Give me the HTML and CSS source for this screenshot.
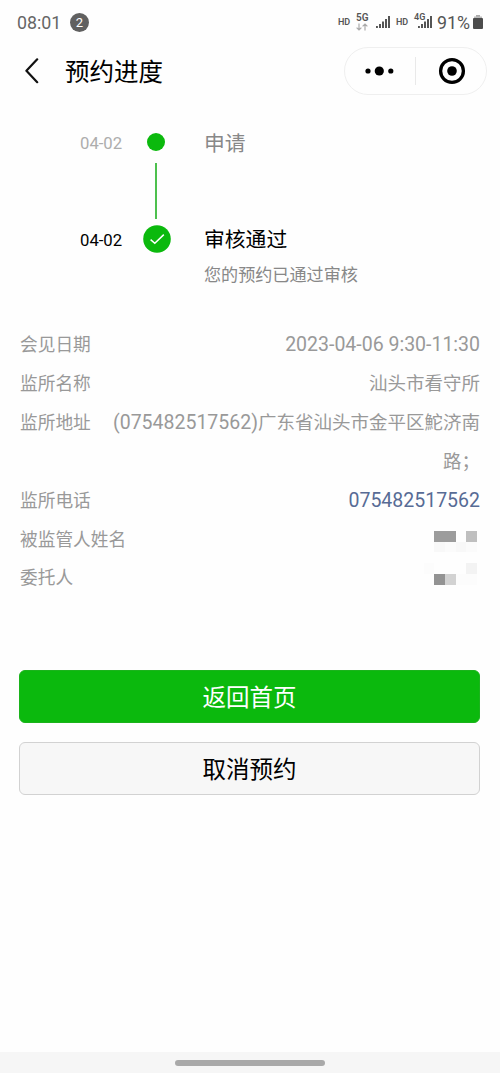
FILE: index.html
```html
<!DOCTYPE html>
<html lang="zh-CN">
<head>
<meta charset="utf-8">
<title>预约进度</title>
<link rel="stylesheet" href="styles.css">
</head>
<body>
<div class="screen">
  <div class="statusbar">
    <span class="clock">08:01</span>
    <span class="count">2</span>
    <div class="signals">
      <span class="hd">HD</span>
      <span class="net"><b>5G</b>
        <svg width="12" height="8" viewBox="0 0 12 8" fill="none" stroke="#aaa" stroke-width="1.2"><path d="M3 0.5V7M0.6 4.6L3 7L5.4 4.6M9 7.5V1M6.6 3.4L9 1L11.4 3.4"/></svg>
      </span>
      <svg class="bars" width="14" height="14" viewBox="0 0 14 14" fill="#555"><path d="M0 11h1.9v2H0zM3 9h2v4H3zM6 6.5h2V13H6zM9 4h2v9H9zM12 1h2v12H12z"/></svg>
      <span class="hd second">HD</span>
      <div class="lte"><b>4G</b>
        <svg class="bars" width="14" height="14" viewBox="0 0 14 14" fill="#555"><path d="M0 11h1.9v2H0zM3 9h2v4H3zM6 6.5h2V13H6zM9 4h2v9H9zM12 1h2v12H12z"/></svg>
      </div>
      <span class="percent">91%</span>
      <svg class="battery" width="10" height="14" viewBox="0 0 10 14"><path d="M3 0h4v2H3z" fill="#aaa"/><path d="M1 1.5h8v3H1z" fill="#bbb"/><rect y="3" width="10" height="11" rx="1" fill="#4c4c4c"/></svg>
    </div>
  </div>

  <header class="navbar">
    <svg class="back" width="14" height="26" viewBox="0 0 14 26" fill="none" stroke="#111" stroke-width="2.2" stroke-linecap="round" stroke-linejoin="round"><path d="M12.2 1.3L1.4 12.8L12.2 24.2"/></svg>
    <h1 class="title">预约进度</h1>
    <div class="capsule">
      <svg width="30" height="12" viewBox="0 0 30 12"><circle cx="4" cy="6" r="2.6"/><circle cx="15.3" cy="6" r="4.6"/><circle cx="26.8" cy="6" r="2.6"/></svg>
      <span class="divider"></span>
      <svg width="28" height="28" viewBox="0 0 28 28"><circle cx="14" cy="14" r="11.4" fill="none" stroke="#000" stroke-width="3.3"/><circle cx="14" cy="14" r="4.8"/></svg>
    </div>
  </header>

  <main>
    <section class="steps">
      <div class="step">
        <time class="date">04-02</time>
        <div class="marker">
          <span class="dot"></span>
          <span class="line"></span>
        </div>
        <div class="step-text">申请</div>
      </div>
      <div class="step current">
        <time class="date">04-02</time>
        <div class="marker">
          <svg width="28" height="28" viewBox="0 0 28 28"><circle cx="14" cy="14" r="13.8" fill="#0bb90d"/><path d="M7.6 14.6L11.8 18.2L20.8 9.6" fill="none" stroke="#fff" stroke-width="1.5"/></svg>
        </div>
        <div class="step-text">审核通过<p class="hint">您的预约已通过审核</p></div>
      </div>
    </section>

    <dl class="details">
      <div class="row"><dt>会见日期</dt><dd><span class="num">2023-04-06 9:30-11:30</span></dd></div>
      <div class="row"><dt>监所名称</dt><dd>汕头市看守所</dd></div>
      <div class="row"><dt>监所地址</dt><dd><span class="num">(075482517562)</span>广东省汕头市金平区鮀济南<br>路；</dd></div>
      <div class="row"><dt>监所电话</dt><dd><span class="num phone">075482517562</span></dd></div>
      <div class="row"><dt>被监管人姓名</dt><dd class="masked">
        <svg width="54" height="39" viewBox="0 0 54 39" shape-rendering="crispEdges"><path fill="#9c9c9c" d="M10 10h22v11H10z"/><path fill="#bfbfbf" d="M42 10h11v11H42z"/><path fill="#f8f8f8" d="M10 21h11v10H10zM32 21h10v10H32z"/><path fill="#fbfbfb" d="M21 21h11v10H21zM42 21h11v10H42z"/></svg>
      </dd></div>
      <div class="row"><dt>委托人</dt><dd class="masked">
        <svg width="54" height="39" viewBox="0 0 54 39" shape-rendering="crispEdges"><path fill="#fcfcfc" d="M0 4h10v11H0zM32 15h21v11H32z"/><path fill="#f3f3f3" d="M42 4h11v11H42z"/><path fill="#939393" d="M10 15h11v11H10z"/><path fill="#d2d2d2" d="M21 15h11v11H21z"/></svg>
      </dd></div>
    </dl>

    <div class="actions">
      <button class="btn primary">返回首页</button>
      <button class="btn">取消预约</button>
    </div>
  </main>

  <footer class="gesture"><span class="handle"></span></footer>
</div>
</body>
</html>
```

FILE: styles.css
```css
* { box-sizing: border-box; margin: 0; padding: 0; }
body {
  background: #fefefe;
  font-family: Roboto, "Noto Sans CJK SC", sans-serif;
  color: #000;
}
svg { display: block; flex: none; }
.screen { width: 500px; height: 1073px; display: flex; flex-direction: column; overflow: hidden; }

.statusbar { height: 44px; padding: 0 17px; display: flex; align-items: center; color: #666; }
.clock { font-size: 17.8px; width: 53px; white-space: nowrap; }
.count {
  width: 19px; height: 19px; border-radius: 50%;
  background: #606060; color: #fff; font-size: 13px; line-height: 19px; text-align: center;
}
.signals { margin-left: auto; display: flex; align-items: center; color: #555; }
.hd { font-size: 9px; font-weight: 600; width: 18px; }
.net { width: 20px; height: 20px; font-size: 10px; line-height: 11px; }
.net b, .lte b { font-weight: 600; display: block; }
.second { margin-left: 6px; }
.lte { position: relative; width: 23px; height: 14px; padding-left: 4px; }
.lte b { position: absolute; left: 0; top: -3px; font-size: 9px; line-height: 10px; background: #fefefe; height: 9px; }
.percent { font-size: 17.8px; width: 36px; white-space: nowrap; }

.navbar { height: 54px; padding: 0 13px 0 25px; display: flex; align-items: center; }
.title { margin-left: 26px; padding-top: 3px; font-size: 24.5px; font-weight: 400; line-height: 36px; }
.capsule {
  margin-left: auto; width: 143px; height: 48px; padding: 0 20px 0 19px;
  border: 1px solid #efefef; border-radius: 24px;
  display: flex; align-items: center; justify-content: space-between;
}
.divider { width: 1px; height: 28px; background: #e9e9e9; margin-left: 2px; margin-right: 3px; }

main { flex: 1; padding: 0 20px; }
.steps { padding: 28px 0 0 60px; height: 228px; }
.step { height: 96px; display: flex; color: #888; }
.date { width: 61px; font-size: 16.7px; line-height: 36px; color: #adadad; }
.marker { width: 31px; display: flex; flex-direction: column; align-items: center; }
.dot { width: 18px; height: 18px; margin: 7px 1px 0 0; border-radius: 50%; background: #0bb90d; }
.line { width: 2px; height: 56px; margin: 12px 1px 0 0; background: #4dc04e; }
.step-text { margin-left: 32px; padding-top: 2px; font-size: 20.8px; line-height: 33px; }
.current, .current .date { color: #000; }
.current .date { line-height: 38px; }
.current .marker svg { margin-top: 2.5px; }
.hint { font-size: 17.1px; line-height: 37px; color: #888; }

.details { font-size: 18.5px; line-height: 38.9px; color: #999; }
.row { display: flex; justify-content: space-between; }
.row dt { font-size: 17.7px; flex: none; }
.row dd { text-align: right; white-space: nowrap; }
.num { font-size: 19.5px; line-height: 1; }
.phone { color: #576b95; }
.masked { height: 38.9px; padding-right: 2px; }

.actions { margin: 72px 0 0 -1px; display: flex; flex-direction: column; gap: 19px; }
.btn {
  height: 53px; border: 1px solid #d2d2d2; border-radius: 6px;
  background: #f7f7f7; color: #000; font: 23.5px/36px Roboto, "Noto Sans CJK SC", sans-serif;
  padding-top: 2px;
}
.primary { background: #0bb90d; border-color: #1bb31c; color: #fff; }

.gesture { height: 21px; background: #f6f6f6; display: flex; align-items: center; justify-content: center; }
.handle { width: 150px; height: 6px; border-radius: 3px; background: #a9a9a9; }
```
